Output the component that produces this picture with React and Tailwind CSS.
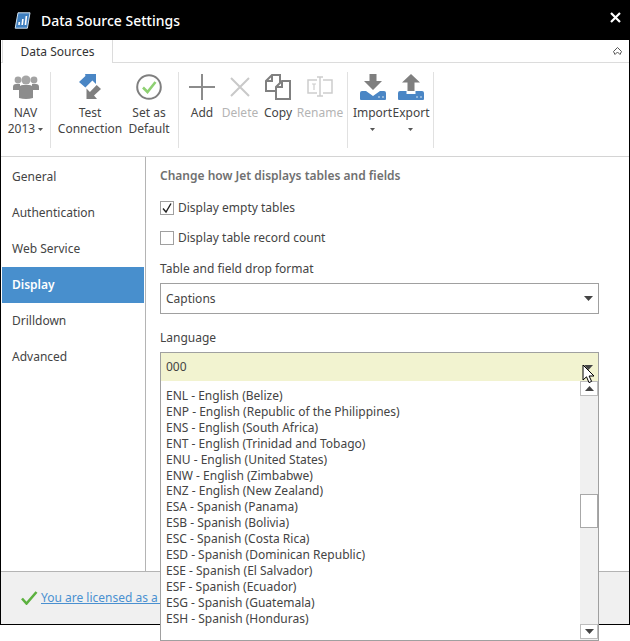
import React from "react";

const sideItems = ["General", "Authentication", "Web Service", "Display", "Drilldown", "Advanced"];

const languages = [
  "ENL - English (Belize)",
  "ENP - English (Republic of the Philippines)",
  "ENS - English (South Africa)",
  "ENT - English (Trinidad and Tobago)",
  "ENU - English (United States)",
  "ENW - English (Zimbabwe)",
  "ENZ - English (New Zealand)",
  "ESA - Spanish (Panama)",
  "ESB - Spanish (Bolivia)",
  "ESC - Spanish (Costa Rica)",
  "ESD - Spanish (Dominican Republic)",
  "ESE - Spanish (El Salvador)",
  "ESF - Spanish (Ecuador)",
  "ESG - Spanish (Guatemala)",
  "ESH - Spanish (Honduras)",
];

function Caret({ className = "" }) {
  return (
    <svg width="9" height="5" viewBox="0 0 9 5" className={className}>
      <path d="M0 0h9L4.5 5z" fill="#444" />
    </svg>
  );
}

function SmallCaret() {
  return (
    <svg width="5" height="3" viewBox="0 0 5 3" className="inline-block">
      <path d="M0 0h5L2.5 3z" fill="#555" />
    </svg>
  );
}

function Logo() {
  return (
    <svg width="17" height="17" viewBox="0 0 17 17">
      <path d="M4 .8h12l-2.6 15.4H1.2z" fill="#3f7fbf" stroke="#cfe0ef" strokeWidth="1" />
      <path d="M4.2 13l.3-3h1.6l-.3 3zM7.4 13l.7-6h1.6l-.7 6zM10.6 13l1-9h1.6l-1 9z" fill="#fff" />
    </svg>
  );
}

function PeopleIcon() {
  return (
    <svg width="26" height="26" viewBox="0 0 26 26">
      <circle cx="5" cy="6" r="3.4" fill="#a3a3a3" />
      <circle cx="21" cy="6" r="3.4" fill="#a3a3a3" />
      <path d="M0 16v-3q0-3 3-3h4v6zM26 16v-3q0-3-3-3h-4v6z" fill="#8c8c8c" />
      <circle cx="13" cy="6" r="4.6" fill="#a6a6a6" />
      <path d="M6 24v-9q0-4 4-4h6q4 0 4 4v9q-7 2-14 0z" fill="#8c8c8c" />
    </svg>
  );
}

function ConnectionIcon() {
  return (
    <svg width="26" height="26" viewBox="0 0 26 26">
      <path d="M7 0h11v11l-3.6-3.6-7 7L1 9l6.4-6z" fill="#4a86c5" transform="translate(1 -1)" />
      <path d="M24 13l-7 6.6L20 23H9.5V12.5l3.4 3.4 6.8-6.9z" fill="#7f7f7f" transform="translate(0 2)" />
    </svg>
  );
}

function DefaultIcon() {
  return (
    <svg width="26" height="26" viewBox="0 0 26 26">
      <circle cx="13" cy="13" r="11.8" fill="none" stroke="#7f7f7f" strokeWidth="2" />
      <path d="M7 13.5l4.5 4.5L19.5 8" fill="none" stroke="#8ed072" strokeWidth="2.6" />
    </svg>
  );
}

function PlusIcon() {
  return (
    <svg width="26" height="26" viewBox="0 0 26 26">
      <path d="M13 0v26M0 13h26" stroke="#8c8c8c" strokeWidth="2" />
    </svg>
  );
}

function DeleteIcon() {
  return (
    <svg width="26" height="26" viewBox="0 0 26 26">
      <path d="M4 4l18 18M22 4L4 22" stroke="#c9c9c9" strokeWidth="2" />
    </svg>
  );
}

function CopyIcon() {
  return (
    <svg width="26" height="26" viewBox="0 0 26 26" fill="#fff" stroke="#808080" strokeWidth="2">
      <path d="M7 1h8v16H1V7z" />
      <path d="M7 1v6H1" fill="none" />
      <path d="M17 7h8v18H11V13z" />
      <path d="M17 7v6h-6" fill="none" />
    </svg>
  );
}

function RenameIcon() {
  return (
    <svg width="26" height="26" viewBox="0 0 26 26" fill="none" stroke="#cdcdcd" strokeWidth="1.5">
      <path d="M10 6H1v13h9M16 6h9v13h-9" />
      <path d="M10 3h6M10 22h6M13 3v19" />
      <path d="M5 10h4M7 10v6" strokeWidth="1.2" />
    </svg>
  );
}

function ImportIcon() {
  return (
    <svg width="26" height="26" viewBox="0 0 26 26">
      <path d="M9.5 0h7v7H22l-9 9-9-9h5.5z" fill="#7f7f7f" />
      <path d="M0 19q0-2 2-2h4l7 5 7-5h4q2 0 2 2v6q0 1-1 1H1q-1 0-1-1z" fill="#4a86c5" />
      <path d="M18 23h2M22 23h2" stroke="#d5e4f2" strokeWidth="1" />
    </svg>
  );
}

function ExportIcon() {
  return (
    <svg width="26" height="26" viewBox="0 0 26 26">
      <path d="M13 0l9 8.5h-5.5V17h-7V8.5H4z" fill="#7f7f7f" />
      <path d="M0 19q0-2 2-2h6.5v3h9v-3H24q2 0 2 2v6q0 1-1 1H1q-1 0-1-1z" fill="#4a86c5" />
      <path d="M18 23h2M22 23h2" stroke="#d5e4f2" strokeWidth="1" />
    </svg>
  );
}

function RibbonButton({ icon, lines, width, disabled }) {
  return (
    <div className={`flex flex-col items-center ${width}`}>
      <div className="h-[26px] mt-[2px] flex items-center justify-center">{icon}</div>
      <div className={`mt-[5px] text-center leading-[16px] whitespace-nowrap ${disabled ? "text-[#b4b4b4]" : "text-[#444]"}`}>
        {lines.map((l, i) => (
          <div key={i} className="h-[16px]">{l}</div>
        ))}
      </div>
    </div>
  );
}

function Sep() {
  return <div className="w-px bg-[#e1e1e1] self-stretch" />;
}

function Checkbox({ checked, label }) {
  return (
    <label className="flex items-center gap-[4px] h-[14px] text-[#444]">
      <span className="w-[14px] h-[14px] border border-[#a0a0a0] bg-white flex items-center justify-center">
        {checked && (
          <svg width="12" height="12" viewBox="0 0 12 12">
            <path d="M2 6.5l3 3.5L10 1.5" fill="none" stroke="#222" strokeWidth="1.4" />
          </svg>
        )}
      </span>
      {label}
    </label>
  );
}

export default function App() {
  return (
    <div className="relative w-[630px] h-[641px] bg-white overflow-hidden text-[12px] text-[#444]" style={{ fontFamily: '"Noto Sans", sans-serif' }}>
      <div className="w-[630px] h-[625px] flex flex-col border-x border-b border-black">
        {/* Title bar */}
        <div className="h-[40px] shrink-0 bg-black flex items-center justify-between pl-[14px] pr-[9px] -mx-px">
          <div className="flex items-center gap-[10px]">
            <Logo />
            <span className="text-white text-[14px] font-medium">Data Source Settings</span>
          </div>
          <svg width="11" height="11" viewBox="0 0 11 11" className="-mt-[5px]">
            <path d="M1 1l9 9M10 1l-9 9" stroke="#fff" strokeWidth="2.2" />
          </svg>
        </div>

        {/* Tabs */}
        <div className="h-[23px] shrink-0 flex items-stretch border-b border-[#dcdcdc] pl-px pr-[7px]">
          <div className="w-[111px] h-[23px] bg-white border-x border-[#dcdcdc] flex items-center justify-center text-[#333]">Data Sources</div>
          <div className="flex-1 flex items-center justify-end">
            <svg width="9" height="8" viewBox="0 0 9 8">
              <path d="M.5 4.5L4.5.5l4 4-1.5 3-2.5-2.5L2 7.5z" fill="none" stroke="#555" strokeWidth="1" />
            </svg>
          </div>
        </div>

        {/* Ribbon */}
        <div className="h-[94px] shrink-0 flex items-stretch border-b border-[#d4d4d4] pt-[9px] pb-[8px]">
          <RibbonButton width="w-[49px]" icon={<PeopleIcon />} lines={["NAV", <span key="y">2013 <SmallCaret /></span>]} />
          <Sep />
          <div className="pl-[9px] flex">
            <RibbonButton width="w-[60px]" icon={<ConnectionIcon />} lines={["Test", "Connection"]} />
            <RibbonButton width="w-[58px]" icon={<DefaultIcon />} lines={["Set as", "Default"]} />
          </div>
          <Sep />
          <div className="pl-[4px] pr-[4px] flex">
            <RibbonButton width="w-[38px]" icon={<PlusIcon />} lines={["Add"]} />
            <RibbonButton width="w-[38px]" icon={<DeleteIcon />} lines={["Delete"]} disabled />
            <RibbonButton width="w-[38px]" icon={<CopyIcon />} lines={["Copy"]} />
            <RibbonButton width="w-[46px]" icon={<RenameIcon />} lines={["Rename"]} disabled />
          </div>
          <Sep />
          <div className="pl-[5px] pr-[3px] flex">
            <RibbonButton width="w-[39px]" icon={<ImportIcon />} lines={["Import", <SmallCaret key="c" />]} />
            <RibbonButton width="w-[38px]" icon={<ExportIcon />} lines={["Export", <SmallCaret key="c" />]} />
          </div>
          <Sep />
        </div>

        {/* Body */}
        <div className="flex-1 flex min-h-0">
          <div className="w-[145px] shrink-0 border-r border-[#b4b4b4] pt-[2px] pl-px">
            {sideItems.map((item) => (
              <div
                key={item}
                className={`h-[36px] w-[142px] flex items-center pl-[10px] ${item === "Display" ? "bg-[#488fcd] text-white font-semibold" : "text-[#444]"}`}
              >
                {item}
              </div>
            ))}
          </div>
          <div className="flex-1 pl-[14px] pr-[30px] flex flex-col">
            <h2 className="mt-[10px] h-[18px] leading-[18px] font-semibold text-[#707070]">Change how Jet displays tables and fields</h2>
            <div className="mt-[16px]">
              <Checkbox checked label="Display empty tables" />
            </div>
            <div className="mt-[16px]">
              <Checkbox label="Display table record count" />
            </div>
            <div className="mt-[16px] h-[16px] leading-[16px]">Table and field drop format</div>
            <div className="mt-[6px] h-[31px] w-[439px] border border-[#a0a0a0] flex items-center justify-between pl-[5px] pr-[5px]">
              <span>Captions</span>
              <Caret />
            </div>
            <div className="mt-[16px] h-[16px] leading-[16px]">Language</div>
            <div className="mt-[6px] h-[31px] w-[439px] border border-b-2 border-[#a0a0a0] bg-[#f2f3d0] flex items-center justify-between pl-[5px] pr-[5px]">
              <span>000</span>
              <Caret />
            </div>
          </div>
        </div>

        {/* Footer */}
        <div className="h-[53px] shrink-0 bg-[#f0f0f0] border-t border-[#b4b4b4] flex items-center pl-[20px] gap-[3px]">
          <svg width="17" height="14" viewBox="0 0 17 14">
            <path d="M1 7.5l4.5 5L15.5 1" fill="none" stroke="#5cb13f" strokeWidth="2.6" />
          </svg>
          <a className="text-[#4a90d0] underline whitespace-nowrap">You are licensed as a Developer</a>
        </div>
      </div>

      {/* Open language list */}
      <div className="absolute left-[160px] top-[381px] w-[439px] h-[260px] bg-white border border-t-0 border-[#a0a0a0] flex">
        <div className="flex-1 pl-[5px] pt-[7px] leading-[15.9px] text-[#444]">
          {languages.map((l) => (
            <div key={l} className="whitespace-nowrap">{l}</div>
          ))}
        </div>
        <div className="w-[18px] shrink-0 bg-[#f0f0f0] flex flex-col relative">
          <div className="h-[15px] bg-white border border-[#bdbdbd] flex items-center justify-center">
            <Caret className="rotate-180" />
          </div>
          <div className="absolute top-[113px] left-0 w-[18px] h-[34px] bg-white border border-[#a8a8a8]" />
          <div className="mt-auto mb-[1px] h-[15px] bg-white border border-[#bdbdbd] flex items-center justify-center">
            <Caret />
          </div>
        </div>
      </div>

      {/* Mouse pointer */}
      <svg width="13" height="20" viewBox="0 0 13 20" className="absolute left-[582px] top-[364px]">
        <path d="M1 1v15l3.5-3.2L7 18.6l2.6-1.2-2.5-5.4H12z" fill="#fff" stroke="#000" strokeWidth="1" />
      </svg>
    </div>
  );
}
